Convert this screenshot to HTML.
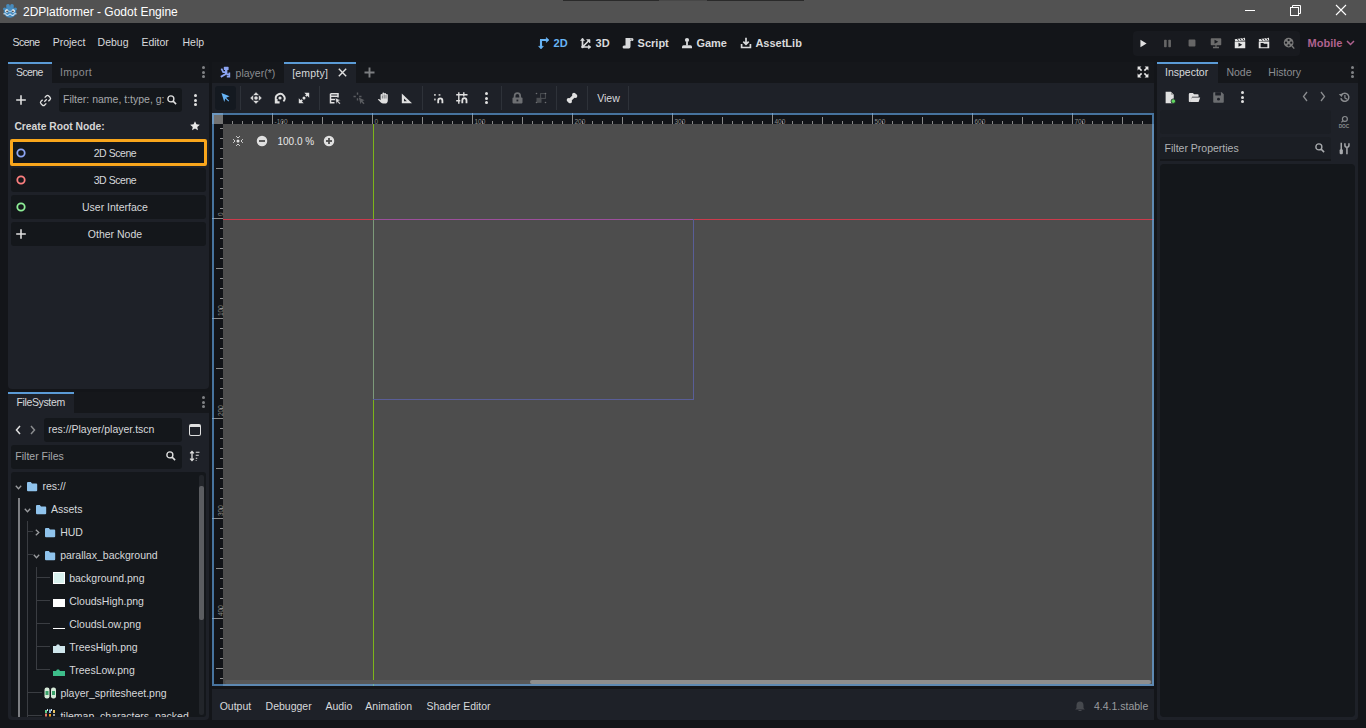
<!DOCTYPE html><html><head><meta charset="utf-8"><style>
html,body{margin:0;padding:0;}
body{width:1366px;height:728px;overflow:hidden;position:relative;background:#131519;font-family:"Liberation Sans",sans-serif;}
.t{position:absolute;white-space:nowrap;line-height:1;}
.r{position:absolute;}
svg.r{overflow:visible;}
</style></head><body>
<div class="r" style="left:0px;top:0px;width:1366px;height:23px;background:#525252;"></div>
<div class="r" style="left:563px;top:0px;width:96px;height:1px;background:#2a2a2a;"></div>
<div class="r" style="left:659px;top:0px;width:48px;height:1px;background:#474747;"></div>
<div class="r" style="left:707px;top:0px;width:97px;height:1px;background:#2a2a2a;"></div>
<svg class="r" style="left:3px;top:4px;" width="14" height="14" viewBox="0 0 14 14"><g fill="#478cbf"><ellipse cx="7" cy="8" rx="6.3" ry="5.8"/><circle cx="5" cy="2" r="1.9"/><circle cx="9" cy="2" r="1.9"/><circle cx="1.6" cy="5" r="1.6"/><circle cx="12.4" cy="5" r="1.6"/></g><circle cx="3.8" cy="7" r="1.7" fill="#fff"/><circle cx="10.2" cy="7" r="1.7" fill="#fff"/><circle cx="4.1" cy="7.3" r="0.9" fill="#414042"/><circle cx="9.9" cy="7.3" r="0.9" fill="#414042"/><circle cx="7" cy="7.5" r="0.8" fill="#cfe3f2"/><path d="M0.4 9.8 H2.8 L3.4 11.4 H5.4 L6 10.2 H8 L8.6 11.4 H10.6 L11.2 9.8 H13.6" stroke="#d8e8f4" stroke-width="1" fill="none"/></svg>
<div class="t" style="left:23px;top:5.84px;font-size:12px;color:#ffffff;">2DPlatformer - Godot Engine</div>
<div class="r" style="left:1245px;top:10px;width:10px;height:1px;background:#fff;"></div>
<svg class="r" style="left:1289px;top:4px;" width="13" height="13" viewBox="0 0 13 13"><rect x="1.5" y="3.5" width="8" height="8" fill="none" stroke="#fff" stroke-width="1"/><path d="M3.5 3.5 V1.5 H11.5 V9.5 H9.5" fill="none" stroke="#fff" stroke-width="1"/></svg>
<svg class="r" style="left:1335px;top:4px;" width="12" height="12" viewBox="0 0 12 12"><path d="M1 1 L11 11 M11 1 L1 11" stroke="#fff" stroke-width="1.1"/></svg>
<div class="t" style="left:12.6px;top:37.11px;font-size:10.5px;color:#d7d9dc;letter-spacing:-0.6px;">Scene</div>
<div class="t" style="left:52.7px;top:37.11px;font-size:10.5px;color:#d7d9dc;">Project</div>
<div class="t" style="left:97.6px;top:37.11px;font-size:10.5px;color:#d7d9dc;">Debug</div>
<div class="t" style="left:141.4px;top:37.11px;font-size:10.5px;color:#d7d9dc;">Editor</div>
<div class="t" style="left:182.5px;top:37.11px;font-size:10.5px;color:#d7d9dc;">Help</div>
<svg class="r" style="left:537px;top:37px;" width="13" height="13" viewBox="0 0 13 13"><path d="M4 3 V10 M3 3 H10" stroke="#68b4f5" stroke-width="2.1" fill="none"/><path d="M1.6 9.3 L4 12 L6.4 9.3Z M9.3 0.6 L12 3 L9.3 5.4Z" fill="#68b4f5" stroke="#68b4f5" stroke-width="0.6" stroke-linejoin="round"/></svg>
<div class="t" style="left:553.6px;top:37.69px;font-size:11px;color:#68b4f5;font-weight:bold;">2D</div>
<svg class="r" style="left:580px;top:37px;" width="12" height="12" viewBox="0 0 12 12"><path d="M2.5 10 V3 M2.5 10 H9.5 M2.5 10 L8.5 4" stroke="#d9dadc" stroke-width="1.7" fill="none"/><path d="M0.6 3.6 L2.5 1 L4.4 3.6Z M8.4 8.1 L11 10 L8.4 11.9Z M6.6 2.6 H10 V6Z" fill="#d9dadc" stroke="#d9dadc" stroke-width="0.6" stroke-linejoin="round"/><circle cx="2.5" cy="10" r="1.3" fill="#d9dadc"/></svg>
<div class="t" style="left:595.6px;top:37.69px;font-size:11px;color:#d9dadc;font-weight:bold;">3D</div>
<svg class="r" style="left:622px;top:37px;" width="12" height="12" viewBox="0 0 12 12"><path d="M3.5 1 H10 Q11.5 1 11.5 2.5 Q11.5 4 10 4 H8.5 V9.5 Q8.5 11.5 6.8 11.5 H2 Q0.6 11.5 0.6 10 Q0.6 8.5 2 8.5 H3.5Z" fill="#d9dadc"/><path d="M9 1.5 Q8.5 2.5 9.5 3.5" stroke="#131519" stroke-width="0.6" fill="none"/></svg>
<div class="t" style="left:637.6px;top:37.69px;font-size:11px;color:#d9dadc;font-weight:bold;">Script</div>
<svg class="r" style="left:681px;top:37px;" width="12" height="12" viewBox="0 0 12 12"><circle cx="6" cy="3" r="2.1" fill="#d9dadc"/><rect x="5.1" y="4.5" width="1.8" height="4" fill="#d9dadc"/><path d="M1 11.3 V9.8 Q1 8.3 2.5 8.3 H9.5 Q11 8.3 11 9.8 V11.3Z" fill="#d9dadc"/></svg>
<div class="t" style="left:696.4px;top:37.69px;font-size:11px;color:#d9dadc;font-weight:bold;">Game</div>
<svg class="r" style="left:740px;top:37px;" width="12" height="12" viewBox="0 0 12 12"><path d="M6 0.8 V7 M3.3 4.6 L6 7.3 L8.7 4.6" stroke="#d9dadc" stroke-width="1.7" fill="none"/><path d="M1.6 7 V10.5 H10.4 V7" stroke="#d9dadc" stroke-width="1.7" fill="none"/></svg>
<div class="t" style="left:755.4px;top:37.69px;font-size:11px;color:#d9dadc;font-weight:bold;">AssetLib</div>
<div class="r" style="left:1133px;top:31px;width:167px;height:25px;background:#181a1f;border-radius:4px;"></div>
<svg class="r" style="left:1138.0px;top:37.5px" width="11" height="11" viewBox="0 0 16 16"><path d="M3.5 2.5 L12.5 8 L3.5 13.5 Z" fill="#e0e0e0"/></svg>
<svg class="r" style="left:1162.0px;top:37.5px" width="11" height="11" viewBox="0 0 16 16"><rect x="3" y="2.5" width="3.8" height="11" rx="1" fill="#666"/><rect x="9.2" y="2.5" width="3.8" height="11" rx="1" fill="#666"/></svg>
<svg class="r" style="left:1187.0px;top:38.0px" width="10" height="10" viewBox="0 0 16 16"><rect x="2.5" y="2.5" width="11" height="11" rx="1.5" fill="#666"/></svg>
<svg class="r" style="left:1210.0px;top:37.0px" width="12" height="12" viewBox="0 0 16 16"><path d="M1 2.5 Q1 1.5 2 1.5 H14 Q15 1.5 15 2.5 V10 Q15 11 14 11 H2 Q1 11 1 10Z" fill="#6b6b6b"/><path d="M6 3.5 L11 6.3 L6 9Z" fill="#1a1c20"/><rect x="7" y="11" width="2" height="2" fill="#6b6b6b"/><rect x="4" y="13" width="8" height="2" fill="#6b6b6b"/></svg>
<svg class="r" style="left:1234.0px;top:37.0px" width="12" height="12" viewBox="0 0 16 16"><path d="M1 6 H15 V15 H1Z" fill="#e6e6e6"/><path d="M1 3 L14.5 1 L15 4.5 L1.5 5.5Z" fill="#e6e6e6"/><path d="M4.5 2.5 L6 5 M8 2 L9.5 4.5 M11.5 1.5 L13 4" stroke="#181a1f" stroke-width="1.2"/><path d="M6 7.5 L11 10.3 L6 13Z" fill="#181a1f"/></svg>
<svg class="r" style="left:1258.0px;top:37.0px" width="12" height="12" viewBox="0 0 16 16"><path d="M1 6 H15 V15 H1Z" fill="#e6e6e6"/><path d="M1 3 L14.5 1 L15 4.5 L1.5 5.5Z" fill="#e6e6e6"/><path d="M4.5 2.5 L6 5 M8 2 L9.5 4.5 M11.5 1.5 L13 4" stroke="#181a1f" stroke-width="1.2"/><path d="M3.5 8 H7 L8 9 H12.5 V13.5 H3.5Z" fill="#181a1f"/></svg>
<svg class="r" style="left:1282.5px;top:37.0px" width="12" height="12" viewBox="0 0 16 16"><circle cx="7.5" cy="7.5" r="6.5" fill="#7a7a7a"/><circle cx="7.5" cy="4" r="1.5" fill="#181a1f"/><circle cx="7.5" cy="11" r="1.5" fill="#181a1f"/><circle cx="4" cy="7.5" r="1.5" fill="#181a1f"/><circle cx="11" cy="7.5" r="1.5" fill="#181a1f"/><path d="M12 12 L15 15.5" stroke="#7a7a7a" stroke-width="1.8"/></svg>
<div class="t" style="left:1307.6px;top:37.69px;font-size:11px;color:#b0628f;font-weight:bold;">Mobile</div>
<svg class="r" style="left:1346px;top:40px;" width="9" height="6" viewBox="0 0 9 6"><path d="M1 1 L4.5 4.5 L8 1" stroke="#b0628f" stroke-width="1.5" fill="none"/></svg>
<div class="r" style="left:8px;top:62px;width:201px;height:327px;background:#1e2128;border-radius:0 0 4px 4px;"></div>
<div class="r" style="left:8px;top:62px;width:201px;height:21px;background:#15171b;"></div>
<div class="r" style="left:8px;top:62px;width:44px;height:21px;background:#1e2128;"></div>
<div class="r" style="left:8px;top:62px;width:44px;height:2px;background:#5b9bd6;"></div>
<div class="t" style="left:16px;top:67.11px;font-size:10.5px;color:#d7d9dc;letter-spacing:-0.6px;">Scene</div>
<div class="t" style="left:60px;top:67.11px;font-size:10.5px;color:#8b8d91;letter-spacing:0.4px;">Import</div>
<div class="r" style="left:201.5px;top:66.0px;width:3px;height:3px;border-radius:2px;background:#808285"></div><div class="r" style="left:201.5px;top:70.5px;width:3px;height:3px;border-radius:2px;background:#808285"></div><div class="r" style="left:201.5px;top:75.0px;width:3px;height:3px;border-radius:2px;background:#808285"></div>
<svg class="r" style="left:14.0px;top:93.0px" width="14" height="14" viewBox="0 0 16 16"><path d="M8 2.5 V13.5 M2.5 8 H13.5" stroke="#e0e0e0" stroke-width="1.8"/></svg>
<svg class="r" style="left:38.5px;top:93.5px" width="13" height="13" viewBox="0 0 16 16"><path d="M6.5 9.5 L9.5 6.5" stroke="#e0e0e0" stroke-width="1.6"/><path d="M7 4.5 L9 2.5 Q10.5 1 12 2.5 L13.5 4 Q15 5.5 13.5 7 L11.5 9" stroke="#e0e0e0" stroke-width="1.6" fill="none"/><path d="M9 11.5 L7 13.5 Q5.5 15 4 13.5 L2.5 12 Q1 10.5 2.5 9 L4.5 7" stroke="#e0e0e0" stroke-width="1.6" fill="none"/></svg>
<div class="r" style="left:59px;top:88px;width:123px;height:24px;background:#14171b;border-radius:3px;"></div>
<div class="t" style="left:63px;top:94.11px;font-size:10.5px;color:#a6a8ab;width:103px;overflow:hidden;">Filter: name, t:type, g:</div>
<svg class="r" style="left:166.0px;top:94.0px" width="12" height="12" viewBox="0 0 16 16"><circle cx="6.5" cy="6.5" r="4" stroke="#e0e0e0" stroke-width="1.8" fill="none"/><path d="M9.5 9.5 L13.5 13.5" stroke="#e0e0e0" stroke-width="2"/></svg>
<div class="r" style="left:193.5px;top:94.0px;width:3px;height:3px;border-radius:2px;background:#e0e0e0"></div><div class="r" style="left:193.5px;top:98.5px;width:3px;height:3px;border-radius:2px;background:#e0e0e0"></div><div class="r" style="left:193.5px;top:103.0px;width:3px;height:3px;border-radius:2px;background:#e0e0e0"></div>
<div class="t" style="left:14.4px;top:122.28px;font-size:10.3px;color:#d6d6d6;font-weight:bold;">Create Root Node:</div>
<svg class="r" style="left:189.0px;top:120.0px" width="12" height="12" viewBox="0 0 16 16"><path d="M8 1.5 L9.9 5.8 L14.5 6.2 L11 9.3 L12 13.8 L8 11.4 L4 13.8 L5 9.3 L1.5 6.2 L6.1 5.8Z" fill="#e8e8e8"/></svg>
<div class="r" style="left:10px;top:139px;width:197px;height:27px;background:#14171b;border:3px solid #f9a61c;border-radius:2px;box-sizing:border-box;"></div>
<div class="r" style="left:11px;top:168px;width:195px;height:24px;background:#14171b;border-radius:3px;"></div>
<div class="r" style="left:11px;top:195px;width:195px;height:24px;background:#14171b;border-radius:3px;"></div>
<div class="r" style="left:11px;top:222px;width:195px;height:24px;background:#14171b;border-radius:3px;"></div>
<svg class="r" style="left:15px;top:147px;" width="12" height="12" viewBox="0 0 12 12"><circle cx="6" cy="6" r="3.7" stroke="#8da5f3" stroke-width="1.8" fill="none"/></svg>
<svg class="r" style="left:15px;top:174px;" width="12" height="12" viewBox="0 0 12 12"><circle cx="6" cy="6" r="3.7" stroke="#fc7f7f" stroke-width="1.8" fill="none"/></svg>
<svg class="r" style="left:15px;top:201px;" width="12" height="12" viewBox="0 0 12 12"><circle cx="6" cy="6" r="3.7" stroke="#8eef97" stroke-width="1.8" fill="none"/></svg>
<svg class="r" style="left:14.0px;top:227.0px" width="14" height="14" viewBox="0 0 16 16"><path d="M8 2.5 V13.5 M2.5 8 H13.5" stroke="#e0e0e0" stroke-width="1.8"/></svg>
<div class="t" style="left:15px;width:200px;text-align:center;top:148.11px;font-size:10.5px;color:#d7d9dc;letter-spacing:-0.45px;">2D Scene</div>
<div class="t" style="left:15px;width:200px;text-align:center;top:175.11px;font-size:10.5px;color:#d7d9dc;letter-spacing:-0.45px;">3D Scene</div>
<div class="t" style="left:15px;width:200px;text-align:center;top:202.11px;font-size:10.5px;color:#d7d9dc;">User Interface</div>
<div class="t" style="left:15px;width:200px;text-align:center;top:229.11px;font-size:10.5px;color:#d7d9dc;">Other Node</div>
<div class="r" style="left:8px;top:392px;width:201px;height:328px;background:#1e2128;border-radius:0 0 4px 4px;"></div>
<div class="r" style="left:8px;top:392px;width:201px;height:21px;background:#15171b;"></div>
<div class="r" style="left:8px;top:392px;width:66px;height:21px;background:#1e2128;"></div>
<div class="r" style="left:8px;top:392px;width:66px;height:2px;background:#5b9bd6;"></div>
<div class="t" style="left:16.4px;top:397.11px;font-size:10.5px;color:#d7d9dc;letter-spacing:-0.35px;">FileSystem</div>
<div class="r" style="left:201.5px;top:396.0px;width:3px;height:3px;border-radius:2px;background:#808285"></div><div class="r" style="left:201.5px;top:400.5px;width:3px;height:3px;border-radius:2px;background:#808285"></div><div class="r" style="left:201.5px;top:405.0px;width:3px;height:3px;border-radius:2px;background:#808285"></div>
<svg class="r" style="left:15px;top:425px;" width="6" height="10" viewBox="0 0 6 10"><path d="M5 1 L1.5 5 L5 9" stroke="#e0e0e0" stroke-width="1.5" fill="none"/></svg>
<svg class="r" style="left:30px;top:425px;" width="6" height="10" viewBox="0 0 6 10"><path d="M1 1 L4.5 5 L1 9" stroke="#8a8c8f" stroke-width="1.5" fill="none"/></svg>
<div class="r" style="left:44px;top:418px;width:138px;height:24px;background:#14171b;border-radius:3px;"></div>
<div class="t" style="left:48.2px;top:424.11px;font-size:10.5px;color:#d7d9dc;">res://Player/player.tscn</div>
<div class="r" style="left:189px;top:424px;width:12px;height:12px;background:transparent;border:1.6px solid #e0e0e0;border-top-width:3px;border-radius:2px;box-sizing:border-box;"></div>
<div class="r" style="left:11px;top:445px;width:171px;height:24px;background:#14171b;border-radius:3px;"></div>
<div class="t" style="left:15.3px;top:451.11px;font-size:10.5px;color:#a6a8ab;">Filter Files</div>
<svg class="r" style="left:165.0px;top:450.0px" width="12" height="12" viewBox="0 0 16 16"><circle cx="6.5" cy="6.5" r="4" stroke="#e0e0e0" stroke-width="1.8" fill="none"/><path d="M9.5 9.5 L13.5 13.5" stroke="#e0e0e0" stroke-width="2"/></svg>
<svg class="r" style="left:189.0px;top:450.0px" width="12" height="12" viewBox="0 0 16 16"><path d="M4 2 V14 M1.5 4.5 L4 2 L6.5 4.5 M1.5 11.5 L4 14 L6.5 11.5" stroke="#e0e0e0" stroke-width="1.8" fill="none"/><path d="M9 3 H14 M9 7 H13 M9 11 H11 M9 14 H10" stroke="#e0e0e0" stroke-width="1.5"/></svg>
<div class="r" style="left:11px;top:472px;width:195px;height:245px;background:#14171b;border-radius:3px;"></div>
<div class="r" style="left:199px;top:475px;width:5px;height:240px;background:#22252a;border-radius:2px;"></div>
<div class="r" style="left:199px;top:486px;width:5px;height:134px;background:#5b5d61;border-radius:2px;"></div>
<div class="r" style="left:0;top:0;width:1366px;height:728px;clip-path:inset(472px 1160px 11px 11px round 3px)"><div class="r" style="left:18px;top:498px;width:2px;height:221px;background:#7d7f83;"></div><div class="r" style="left:27px;top:521px;width:1px;height:198px;background:#3a3d42;"></div><div class="r" style="left:36px;top:567px;width:1px;height:103px;background:#3a3d42;"></div><div class="r" style="left:28px;top:531px;width:5px;height:1px;background:#3a3d42;"></div><div class="r" style="left:28px;top:554px;width:5px;height:1px;background:#3a3d42;"></div><div class="r" style="left:37px;top:577px;width:13px;height:1px;background:#3a3d42;"></div><div class="r" style="left:37px;top:600px;width:13px;height:1px;background:#3a3d42;"></div><div class="r" style="left:37px;top:623px;width:13px;height:1px;background:#3a3d42;"></div><div class="r" style="left:37px;top:646px;width:13px;height:1px;background:#3a3d42;"></div><div class="r" style="left:37px;top:669px;width:13px;height:1px;background:#3a3d42;"></div><div class="r" style="left:28px;top:692px;width:14px;height:1px;background:#3a3d42;"></div><div class="r" style="left:28px;top:715px;width:14px;height:1px;background:#3a3d42;"></div><svg class="r" style="left:15px;top:484.5px;" width="7" height="5" viewBox="0 0 7 5"><path d="M0.8 0.8 L3.5 3.8 L6.2 0.8" stroke="#9a9c9f" stroke-width="1.3" fill="none"/></svg><svg class="r" style="left:27px;top:482px;" width="11" height="10" viewBox="0 0 11 10"><path d="M0 1 Q0 0 1 0 H3.8 L5 1.4 H9.2 Q10.2 1.4 10.2 2.4 V8.2 Q10.2 9.2 9.2 9.2 H1 Q0 9.2 0 8.2Z" fill="#8fc3ec"/></svg><div class="t" style="left:42.4px;top:481.11px;font-size:10.5px;color:#d7d9dc;">res://</div><svg class="r" style="left:24px;top:507.5px;" width="7" height="5" viewBox="0 0 7 5"><path d="M0.8 0.8 L3.5 3.8 L6.2 0.8" stroke="#9a9c9f" stroke-width="1.3" fill="none"/></svg><svg class="r" style="left:35.7px;top:504.5px;" width="11" height="10" viewBox="0 0 11 10"><path d="M0 1 Q0 0 1 0 H3.8 L5 1.4 H9.2 Q10.2 1.4 10.2 2.4 V8.2 Q10.2 9.2 9.2 9.2 H1 Q0 9.2 0 8.2Z" fill="#8fc3ec"/></svg><div class="t" style="left:51px;top:504.11px;font-size:10.5px;color:#d7d9dc;">Assets</div><svg class="r" style="left:35px;top:528.5px;" width="5" height="7" viewBox="0 0 5 7"><path d="M0.8 0.8 L3.8 3.5 L0.8 6.2" stroke="#9a9c9f" stroke-width="1.3" fill="none"/></svg><svg class="r" style="left:45px;top:527.5px;" width="11" height="10" viewBox="0 0 11 10"><path d="M0 1 Q0 0 1 0 H3.8 L5 1.4 H9.2 Q10.2 1.4 10.2 2.4 V8.2 Q10.2 9.2 9.2 9.2 H1 Q0 9.2 0 8.2Z" fill="#8fc3ec"/></svg><div class="t" style="left:60.2px;top:527.11px;font-size:10.5px;color:#d7d9dc;">HUD</div><svg class="r" style="left:33px;top:553.5px;" width="7" height="5" viewBox="0 0 7 5"><path d="M0.8 0.8 L3.5 3.8 L6.2 0.8" stroke="#9a9c9f" stroke-width="1.3" fill="none"/></svg><svg class="r" style="left:45px;top:550.5px;" width="11" height="10" viewBox="0 0 11 10"><path d="M0 1 Q0 0 1 0 H3.8 L5 1.4 H9.2 Q10.2 1.4 10.2 2.4 V8.2 Q10.2 9.2 9.2 9.2 H1 Q0 9.2 0 8.2Z" fill="#8fc3ec"/></svg><div class="t" style="left:60.2px;top:550.11px;font-size:10.5px;color:#d7d9dc;">parallax_background</div><div class="r" style="left:53px;top:572px;width:12px;height:12px;background:#d8f1ee;box-shadow:inset 0 0 0 1px #ffffff;"></div><div class="t" style="left:69.2px;top:573.11px;font-size:10.5px;color:#d7d9dc;">background.png</div><div class="r" style="left:53px;top:599px;width:12px;height:8px;background:#ffffff;"></div><div class="t" style="left:69.2px;top:596.11px;font-size:10.5px;color:#d7d9dc;">CloudsHigh.png</div><div class="r" style="left:53px;top:628px;width:12px;height:1px;background:#ffffff;"></div><div class="t" style="left:69.2px;top:619.11px;font-size:10.5px;color:#d7d9dc;">CloudsLow.png</div><svg class="r" style="left:53px;top:643px;" width="12" height="10" viewBox="0 0 12 10"><path d="M0 3 H3 L4 1.5 H6 L7 3 H12 V10 H0Z" fill="#cfe6ec"/></svg><div class="t" style="left:69.2px;top:642.11px;font-size:10.5px;color:#d7d9dc;">TreesHigh.png</div><svg class="r" style="left:53px;top:669px;" width="12" height="8" viewBox="0 0 12 8"><path d="M0 2 H3 L4 0.5 H6 L7 2 H12 V7 H0Z" fill="#3dbd8a"/></svg><div class="t" style="left:69.2px;top:665.11px;font-size:10.5px;color:#d7d9dc;">TreesLow.png</div><svg class="r" style="left:44px;top:687px;" width="13" height="12" viewBox="0 0 13 12"><rect x="0.5" y="0.5" width="5" height="11" rx="2.2" fill="#d5ead8"/><rect x="7" y="0.5" width="5" height="11" rx="2.2" fill="#d5ead8"/><rect x="1.5" y="4" width="3" height="4" fill="#3aa36a"/><rect x="8" y="4" width="3" height="4" fill="#3aa36a"/></svg><div class="t" style="left:60.4px;top:688.11px;font-size:10.5px;color:#d7d9dc;">player_spritesheet.png</div><svg class="r" style="left:45px;top:709px;" width="11" height="8" viewBox="0 0 11 8"><rect x="0" y="1" width="2" height="3" fill="#5fd08a"/><rect x="4" y="0.5" width="2" height="3.5" fill="#8fb0d8"/><rect x="8" y="1" width="2" height="3" fill="#e8c060"/><rect x="0" y="4.5" width="2" height="3" fill="#e07a6a"/><rect x="4" y="5" width="2" height="2.5" fill="#f0a020"/><rect x="8" y="5" width="2" height="2" fill="#9a9aa0"/><rect x="2" y="0" width="1" height="2" fill="#cfe8f0"/><rect x="6" y="0" width="1" height="2" fill="#cfe8f0"/></svg><div class="t" style="left:60.4px;top:711.11px;font-size:10.5px;color:#d7d9dc;">tilemap_characters_packed</div></div>
<div class="r" style="left:212px;top:62px;width:942px;height:21px;background:#15171b;"></div>
<div class="r" style="left:284px;top:62px;width:72px;height:21px;background:#1e2128;"></div>
<div class="r" style="left:284px;top:62px;width:72px;height:2px;background:#5b9bd6;"></div>
<svg class="r" style="left:220px;top:66px;" width="12" height="12" viewBox="0 0 12 12"><rect x="3.8" y="0.8" width="4.8" height="3.2" rx="0.6" fill="#8da5f3"/><g stroke="#8da5f3" fill="none"><path d="M6.2 3.5 V8.6" stroke-width="2.4"/><path d="M1.4 2.6 L3.2 6.2 H6" stroke-width="1.7"/><path d="M5.8 8 L0.8 10.9" stroke-width="1.9"/><path d="M6.5 8.4 H9.4 V6.6 M9.4 8.4 V10.6 H6.8" stroke-width="1.6"/></g></svg>
<div class="t" style="left:235.6px;top:67.51px;font-size:10.5px;color:#8b8d91;">player(*)</div>
<div class="t" style="left:292.2px;top:67.51px;font-size:10.5px;color:#d7d9dc;letter-spacing:0.2px;">[empty]</div>
<svg class="r" style="left:337.5px;top:67.5px;" width="9" height="9" viewBox="0 0 9 9"><path d="M0.8 0.8 L8.2 8.2 M8.2 0.8 L0.8 8.2" stroke="#e0e0e0" stroke-width="1.4"/></svg>
<svg class="r" style="left:363.5px;top:67px;" width="11" height="11" viewBox="0 0 11 11"><path d="M5.5 0.5 V10.5 M0.5 5.5 H10.5" stroke="#7c7e81" stroke-width="1.9"/></svg>
<svg class="r" style="left:1137px;top:66px;" width="12" height="12" viewBox="0 0 12 12"><path d="M0.6 0.6 H4.4 L0.6 4.4Z M11.4 0.6 H7.6 L11.4 4.4Z M0.6 11.4 H4.4 L0.6 7.6Z M11.4 11.4 H7.6 L11.4 7.6Z" fill="#e8e8e8"/><path d="M1.5 1.5 L4.6 4.6 M10.5 1.5 L7.4 4.6 M1.5 10.5 L4.6 7.4 M10.5 10.5 L7.4 7.4" stroke="#e8e8e8" stroke-width="1.6"/></svg>
<div class="r" style="left:212px;top:83px;width:942px;height:30px;background:#1e2128;"></div>
<div class="r" style="left:215px;top:86px;width:21px;height:24px;background:#141920;border-radius:3px;"></div>
<svg class="r" style="left:219.0px;top:90.7px" width="13" height="13" viewBox="0 0 16 16"><path d="M3 2.5 L13 6.5 L8.8 8.3 L12.5 12 L11.5 13 L7.8 9.3 L6.5 13.5Z" fill="#66b3f5"/></svg>
<div class="r" style="left:240px;top:86px;width:1px;height:24px;background:#2e3239;"></div>
<div class="r" style="left:319px;top:86px;width:1px;height:24px;background:#2e3239;"></div>
<div class="r" style="left:422px;top:86px;width:1px;height:24px;background:#2e3239;"></div>
<div class="r" style="left:501px;top:86px;width:1px;height:24px;background:#2e3239;"></div>
<div class="r" style="left:556px;top:86px;width:1px;height:24px;background:#2e3239;"></div>
<div class="r" style="left:587px;top:86px;width:1px;height:24px;background:#2e3239;"></div>
<div class="r" style="left:628px;top:86px;width:1px;height:24px;background:#2e3239;"></div>
<svg class="r" style="left:250px;top:92px;" width="12" height="12" viewBox="0 0 12 12"><path d="M6 0.6 L8.3 2.9 H3.7Z M6 11.4 L8.3 9.1 H3.7Z M0.6 6 L2.9 3.7 V8.3Z M11.4 6 L9.1 3.7 V8.3Z" fill="#e0e0e0" stroke="#e0e0e0" stroke-width="0.5" stroke-linejoin="round"/><circle cx="6" cy="6" r="1.8" fill="#e0e0e0"/></svg>
<svg class="r" style="left:274px;top:92px;" width="12" height="12" viewBox="0 0 12 12"><path d="M2.2 8.2 A4.4 4.4 0 1 1 9.4 9.4" stroke="#e0e0e0" stroke-width="1.9" fill="none"/><path d="M0.8 7 H3.6 V9.3 H5.6 V11.6 H0.8Z" fill="#e0e0e0"/><circle cx="6" cy="6" r="1.6" fill="#e0e0e0"/></svg>
<svg class="r" style="left:298px;top:92px;" width="12" height="12" viewBox="0 0 12 12"><path d="M6.3 0.8 H11.2 V5.7Z M5.7 11.2 H0.8 V6.3Z" fill="#e0e0e0"/><path d="M10 2 L7.8 4.2 M2 10 L4.2 7.8" stroke="#e0e0e0" stroke-width="1.8"/><circle cx="6" cy="6" r="1.5" fill="#e0e0e0"/></svg>
<svg class="r" style="left:329px;top:92px;" width="12" height="12" viewBox="0 0 12 12"><path d="M1.5 1.8 H9 V5.5 M1.5 1.8 V10.8 H5.5 M1.5 4.3 H8.5 M1.5 7.5 H6" stroke="#e0e0e0" stroke-width="1.5" fill="none"/><path d="M6.2 5.8 L11.6 8.3 L9.4 9.1 L11.5 11.2 L10.5 12.2 L8.4 10.1 L7.5 12.3Z" fill="#e0e0e0" stroke="#1e2128" stroke-width="0.5"/></svg>
<svg class="r" style="left:353px;top:92px;" width="12" height="12" viewBox="0 0 12 12"><path d="M4.5 0.5 V2.8 M4.5 6.2 V8.5 M0.5 4.5 H2.8 M6.2 4.5 H8.5" stroke="#5a5c60" stroke-width="1.4"/><path d="M5.8 5.6 L11.6 8.3 L9.4 9.1 L11.5 11.2 L10.5 12.2 L8.4 10.1 L7.5 12.3Z" fill="#5a5c60"/></svg>
<svg class="r" style="left:377px;top:92px;" width="12" height="12" viewBox="0 0 12 12"><path d="M0.8 7.6 Q1.6 6.6 2.8 7.4 L3.6 8.2 V3 Q3.6 2 4.5 2 Q5.4 2 5.4 3 V1.4 Q5.4 0.5 6.3 0.5 Q7.2 0.5 7.2 1.4 V1.8 Q7.2 1 8.1 1 Q9 1 9 1.9 V2.8 Q9 2 9.9 2 Q10.8 2 10.8 2.9 V8.5 Q10.8 11.6 7.8 11.6 H6.2 Q4.8 11.6 3.8 10.6Z" fill="#e0e0e0"/><path d="M5.4 3.5 V6.5 M7.2 2.5 V6.5 M9 3 V6.5" stroke="#1e2128" stroke-width="0.5"/></svg>
<svg class="r" style="left:401px;top:93px;" width="12" height="11" viewBox="0 0 12 11"><path d="M0.8 0.5 V10.3 H11 Z" fill="#e0e0e0"/><path d="M3 5.5 V8.3 H5.9Z" fill="#1e2128"/></svg>
<svg class="r" style="left:433px;top:93px;" width="11" height="11" viewBox="0 0 11 11"><rect x="1" y="1" width="1.8" height="1.8" fill="#b8b8b8"/><rect x="5.6" y="1" width="1.8" height="1.8" fill="#b8b8b8"/><rect x="1" y="5.6" width="1.8" height="1.8" fill="#b8b8b8"/><path d="M5.2 10.2 V7.8 Q5.2 5.4 7.3 5.4 Q9.4 5.4 9.4 7.8 V10.2" stroke="#e0e0e0" stroke-width="1.8" fill="none"/></svg>
<svg class="r" style="left:456px;top:92px;" width="12" height="12" viewBox="0 0 12 12"><path d="M2.8 0.3 V11.7 M7.8 0.3 V4.5 M0.2 2.7 H11.5 M0.2 8.7 H4.3" stroke="#e0e0e0" stroke-width="1.4" fill="none"/><path d="M6.3 11.2 V8.6 Q6.3 6.2 8.4 6.2 Q10.5 6.2 10.5 8.6 V11.2" stroke="#e0e0e0" stroke-width="1.8" fill="none"/></svg>
<div class="r" style="left:484.5px;top:92.0px;width:3px;height:3px;border-radius:2px;background:#e0e0e0"></div><div class="r" style="left:484.5px;top:96.5px;width:3px;height:3px;border-radius:2px;background:#e0e0e0"></div><div class="r" style="left:484.5px;top:101.0px;width:3px;height:3px;border-radius:2px;background:#e0e0e0"></div>
<svg class="r" style="left:512px;top:92px;" width="11" height="12" viewBox="0 0 11 12"><path d="M2.6 6 V4.4 Q2.6 1.2 5.4 1.2 Q8.2 1.2 8.2 4.4 V6" stroke="#6d6f72" stroke-width="1.8" fill="none"/><rect x="0.5" y="5.6" width="10" height="5.8" rx="0.8" fill="#6d6f72"/><rect x="4.5" y="7.6" width="1.8" height="1.8" fill="#1e2128"/></svg>
<svg class="r" style="left:535px;top:92px;" width="12" height="12" viewBox="0 0 12 12"><rect x="1.5" y="5.8" width="5" height="5" fill="#4b4e52"/><rect x="5.6" y="1.6" width="4.8" height="4.8" fill="none" stroke="#4b4e52" stroke-width="1"/><circle cx="1.5" cy="1.5" r="0.8" fill="#6d6f72"/><circle cx="10.5" cy="1.5" r="0.8" fill="#6d6f72"/><circle cx="1.5" cy="10.5" r="0.8" fill="#6d6f72"/><circle cx="10.5" cy="10.5" r="0.8" fill="#6d6f72"/></svg>
<svg class="r" style="left:566px;top:92px;" width="12" height="12" viewBox="0 0 12 12"><path d="M3.6 8.4 L8.4 3.6" stroke="#e0e0e0" stroke-width="3"/><circle cx="2.6" cy="8" r="1.9" fill="#e0e0e0"/><circle cx="4" cy="9.4" r="1.9" fill="#e0e0e0"/><circle cx="8" cy="2.6" r="1.9" fill="#e0e0e0"/><circle cx="9.4" cy="4" r="1.9" fill="#e0e0e0"/></svg>
<div class="t" style="left:597.2px;top:93.11px;font-size:10.5px;color:#d7d9dc;">View</div>
<div class="r" style="left:212px;top:113px;width:942px;height:573px;background:#4d4d4d;"></div>
<div class="r" style="left:212px;top:113px;width:942px;height:11px;background:#121418;"></div>
<div class="r" style="left:212px;top:113px;width:11px;height:573px;background:#121418;"></div>
<div class="r" style="left:212px;top:113px;width:11px;height:11px;background:#727272;"></div>
<div class="r" style="left:232px;top:121px;width:1px;height:3px;background:#8c8c8c;"></div>
<div class="r" style="left:242px;top:121px;width:1px;height:3px;background:#8c8c8c;"></div>
<div class="r" style="left:252px;top:121px;width:1px;height:3px;background:#8c8c8c;"></div>
<div class="r" style="left:262px;top:121px;width:1px;height:3px;background:#8c8c8c;"></div>
<div class="r" style="left:272px;top:113px;width:1px;height:11px;background:#8c8c8c;"></div>
<div class="r" style="left:282px;top:121px;width:1px;height:3px;background:#8c8c8c;"></div>
<div class="r" style="left:292px;top:121px;width:1px;height:3px;background:#8c8c8c;"></div>
<div class="r" style="left:302px;top:121px;width:1px;height:3px;background:#8c8c8c;"></div>
<div class="r" style="left:312px;top:121px;width:1px;height:3px;background:#8c8c8c;"></div>
<div class="r" style="left:322px;top:117px;width:1px;height:7px;background:#8c8c8c;"></div>
<div class="r" style="left:332px;top:121px;width:1px;height:3px;background:#8c8c8c;"></div>
<div class="r" style="left:342px;top:121px;width:1px;height:3px;background:#8c8c8c;"></div>
<div class="r" style="left:352px;top:121px;width:1px;height:3px;background:#8c8c8c;"></div>
<div class="r" style="left:362px;top:121px;width:1px;height:3px;background:#8c8c8c;"></div>
<div class="r" style="left:372px;top:113px;width:1px;height:11px;background:#8c8c8c;"></div>
<div class="r" style="left:382px;top:121px;width:1px;height:3px;background:#8c8c8c;"></div>
<div class="r" style="left:392px;top:121px;width:1px;height:3px;background:#8c8c8c;"></div>
<div class="r" style="left:402px;top:121px;width:1px;height:3px;background:#8c8c8c;"></div>
<div class="r" style="left:412px;top:121px;width:1px;height:3px;background:#8c8c8c;"></div>
<div class="r" style="left:422px;top:117px;width:1px;height:7px;background:#8c8c8c;"></div>
<div class="r" style="left:432px;top:121px;width:1px;height:3px;background:#8c8c8c;"></div>
<div class="r" style="left:442px;top:121px;width:1px;height:3px;background:#8c8c8c;"></div>
<div class="r" style="left:452px;top:121px;width:1px;height:3px;background:#8c8c8c;"></div>
<div class="r" style="left:462px;top:121px;width:1px;height:3px;background:#8c8c8c;"></div>
<div class="r" style="left:472px;top:113px;width:1px;height:11px;background:#8c8c8c;"></div>
<div class="r" style="left:482px;top:121px;width:1px;height:3px;background:#8c8c8c;"></div>
<div class="r" style="left:492px;top:121px;width:1px;height:3px;background:#8c8c8c;"></div>
<div class="r" style="left:502px;top:121px;width:1px;height:3px;background:#8c8c8c;"></div>
<div class="r" style="left:512px;top:121px;width:1px;height:3px;background:#8c8c8c;"></div>
<div class="r" style="left:522px;top:117px;width:1px;height:7px;background:#8c8c8c;"></div>
<div class="r" style="left:532px;top:121px;width:1px;height:3px;background:#8c8c8c;"></div>
<div class="r" style="left:542px;top:121px;width:1px;height:3px;background:#8c8c8c;"></div>
<div class="r" style="left:552px;top:121px;width:1px;height:3px;background:#8c8c8c;"></div>
<div class="r" style="left:562px;top:121px;width:1px;height:3px;background:#8c8c8c;"></div>
<div class="r" style="left:572px;top:113px;width:1px;height:11px;background:#8c8c8c;"></div>
<div class="r" style="left:582px;top:121px;width:1px;height:3px;background:#8c8c8c;"></div>
<div class="r" style="left:592px;top:121px;width:1px;height:3px;background:#8c8c8c;"></div>
<div class="r" style="left:602px;top:121px;width:1px;height:3px;background:#8c8c8c;"></div>
<div class="r" style="left:612px;top:121px;width:1px;height:3px;background:#8c8c8c;"></div>
<div class="r" style="left:622px;top:117px;width:1px;height:7px;background:#8c8c8c;"></div>
<div class="r" style="left:632px;top:121px;width:1px;height:3px;background:#8c8c8c;"></div>
<div class="r" style="left:642px;top:121px;width:1px;height:3px;background:#8c8c8c;"></div>
<div class="r" style="left:652px;top:121px;width:1px;height:3px;background:#8c8c8c;"></div>
<div class="r" style="left:662px;top:121px;width:1px;height:3px;background:#8c8c8c;"></div>
<div class="r" style="left:672px;top:113px;width:1px;height:11px;background:#8c8c8c;"></div>
<div class="r" style="left:682px;top:121px;width:1px;height:3px;background:#8c8c8c;"></div>
<div class="r" style="left:692px;top:121px;width:1px;height:3px;background:#8c8c8c;"></div>
<div class="r" style="left:702px;top:121px;width:1px;height:3px;background:#8c8c8c;"></div>
<div class="r" style="left:712px;top:121px;width:1px;height:3px;background:#8c8c8c;"></div>
<div class="r" style="left:722px;top:117px;width:1px;height:7px;background:#8c8c8c;"></div>
<div class="r" style="left:732px;top:121px;width:1px;height:3px;background:#8c8c8c;"></div>
<div class="r" style="left:742px;top:121px;width:1px;height:3px;background:#8c8c8c;"></div>
<div class="r" style="left:752px;top:121px;width:1px;height:3px;background:#8c8c8c;"></div>
<div class="r" style="left:762px;top:121px;width:1px;height:3px;background:#8c8c8c;"></div>
<div class="r" style="left:772px;top:113px;width:1px;height:11px;background:#8c8c8c;"></div>
<div class="r" style="left:782px;top:121px;width:1px;height:3px;background:#8c8c8c;"></div>
<div class="r" style="left:792px;top:121px;width:1px;height:3px;background:#8c8c8c;"></div>
<div class="r" style="left:802px;top:121px;width:1px;height:3px;background:#8c8c8c;"></div>
<div class="r" style="left:812px;top:121px;width:1px;height:3px;background:#8c8c8c;"></div>
<div class="r" style="left:822px;top:117px;width:1px;height:7px;background:#8c8c8c;"></div>
<div class="r" style="left:832px;top:121px;width:1px;height:3px;background:#8c8c8c;"></div>
<div class="r" style="left:842px;top:121px;width:1px;height:3px;background:#8c8c8c;"></div>
<div class="r" style="left:852px;top:121px;width:1px;height:3px;background:#8c8c8c;"></div>
<div class="r" style="left:862px;top:121px;width:1px;height:3px;background:#8c8c8c;"></div>
<div class="r" style="left:872px;top:113px;width:1px;height:11px;background:#8c8c8c;"></div>
<div class="r" style="left:882px;top:121px;width:1px;height:3px;background:#8c8c8c;"></div>
<div class="r" style="left:892px;top:121px;width:1px;height:3px;background:#8c8c8c;"></div>
<div class="r" style="left:902px;top:121px;width:1px;height:3px;background:#8c8c8c;"></div>
<div class="r" style="left:912px;top:121px;width:1px;height:3px;background:#8c8c8c;"></div>
<div class="r" style="left:922px;top:117px;width:1px;height:7px;background:#8c8c8c;"></div>
<div class="r" style="left:932px;top:121px;width:1px;height:3px;background:#8c8c8c;"></div>
<div class="r" style="left:942px;top:121px;width:1px;height:3px;background:#8c8c8c;"></div>
<div class="r" style="left:952px;top:121px;width:1px;height:3px;background:#8c8c8c;"></div>
<div class="r" style="left:962px;top:121px;width:1px;height:3px;background:#8c8c8c;"></div>
<div class="r" style="left:972px;top:113px;width:1px;height:11px;background:#8c8c8c;"></div>
<div class="r" style="left:982px;top:121px;width:1px;height:3px;background:#8c8c8c;"></div>
<div class="r" style="left:992px;top:121px;width:1px;height:3px;background:#8c8c8c;"></div>
<div class="r" style="left:1002px;top:121px;width:1px;height:3px;background:#8c8c8c;"></div>
<div class="r" style="left:1012px;top:121px;width:1px;height:3px;background:#8c8c8c;"></div>
<div class="r" style="left:1022px;top:117px;width:1px;height:7px;background:#8c8c8c;"></div>
<div class="r" style="left:1032px;top:121px;width:1px;height:3px;background:#8c8c8c;"></div>
<div class="r" style="left:1042px;top:121px;width:1px;height:3px;background:#8c8c8c;"></div>
<div class="r" style="left:1052px;top:121px;width:1px;height:3px;background:#8c8c8c;"></div>
<div class="r" style="left:1062px;top:121px;width:1px;height:3px;background:#8c8c8c;"></div>
<div class="r" style="left:1072px;top:113px;width:1px;height:11px;background:#8c8c8c;"></div>
<div class="r" style="left:1082px;top:121px;width:1px;height:3px;background:#8c8c8c;"></div>
<div class="r" style="left:1092px;top:121px;width:1px;height:3px;background:#8c8c8c;"></div>
<div class="r" style="left:1102px;top:121px;width:1px;height:3px;background:#8c8c8c;"></div>
<div class="r" style="left:1112px;top:121px;width:1px;height:3px;background:#8c8c8c;"></div>
<div class="r" style="left:1122px;top:117px;width:1px;height:7px;background:#8c8c8c;"></div>
<div class="r" style="left:1132px;top:121px;width:1px;height:3px;background:#8c8c8c;"></div>
<div class="r" style="left:1142px;top:121px;width:1px;height:3px;background:#8c8c8c;"></div>
<div class="r" style="left:220px;top:128px;width:3px;height:1px;background:#8c8c8c;"></div>
<div class="r" style="left:220px;top:138px;width:3px;height:1px;background:#8c8c8c;"></div>
<div class="r" style="left:220px;top:148px;width:3px;height:1px;background:#8c8c8c;"></div>
<div class="r" style="left:220px;top:158px;width:3px;height:1px;background:#8c8c8c;"></div>
<div class="r" style="left:216px;top:168px;width:7px;height:1px;background:#8c8c8c;"></div>
<div class="r" style="left:220px;top:178px;width:3px;height:1px;background:#8c8c8c;"></div>
<div class="r" style="left:220px;top:188px;width:3px;height:1px;background:#8c8c8c;"></div>
<div class="r" style="left:220px;top:198px;width:3px;height:1px;background:#8c8c8c;"></div>
<div class="r" style="left:220px;top:208px;width:3px;height:1px;background:#8c8c8c;"></div>
<div class="r" style="left:212px;top:218px;width:11px;height:1px;background:#8c8c8c;"></div>
<div class="r" style="left:220px;top:228px;width:3px;height:1px;background:#8c8c8c;"></div>
<div class="r" style="left:220px;top:238px;width:3px;height:1px;background:#8c8c8c;"></div>
<div class="r" style="left:220px;top:248px;width:3px;height:1px;background:#8c8c8c;"></div>
<div class="r" style="left:220px;top:258px;width:3px;height:1px;background:#8c8c8c;"></div>
<div class="r" style="left:216px;top:268px;width:7px;height:1px;background:#8c8c8c;"></div>
<div class="r" style="left:220px;top:278px;width:3px;height:1px;background:#8c8c8c;"></div>
<div class="r" style="left:220px;top:288px;width:3px;height:1px;background:#8c8c8c;"></div>
<div class="r" style="left:220px;top:298px;width:3px;height:1px;background:#8c8c8c;"></div>
<div class="r" style="left:220px;top:308px;width:3px;height:1px;background:#8c8c8c;"></div>
<div class="r" style="left:212px;top:318px;width:11px;height:1px;background:#8c8c8c;"></div>
<div class="r" style="left:220px;top:328px;width:3px;height:1px;background:#8c8c8c;"></div>
<div class="r" style="left:220px;top:338px;width:3px;height:1px;background:#8c8c8c;"></div>
<div class="r" style="left:220px;top:348px;width:3px;height:1px;background:#8c8c8c;"></div>
<div class="r" style="left:220px;top:358px;width:3px;height:1px;background:#8c8c8c;"></div>
<div class="r" style="left:216px;top:368px;width:7px;height:1px;background:#8c8c8c;"></div>
<div class="r" style="left:220px;top:378px;width:3px;height:1px;background:#8c8c8c;"></div>
<div class="r" style="left:220px;top:388px;width:3px;height:1px;background:#8c8c8c;"></div>
<div class="r" style="left:220px;top:398px;width:3px;height:1px;background:#8c8c8c;"></div>
<div class="r" style="left:220px;top:408px;width:3px;height:1px;background:#8c8c8c;"></div>
<div class="r" style="left:212px;top:418px;width:11px;height:1px;background:#8c8c8c;"></div>
<div class="r" style="left:220px;top:428px;width:3px;height:1px;background:#8c8c8c;"></div>
<div class="r" style="left:220px;top:438px;width:3px;height:1px;background:#8c8c8c;"></div>
<div class="r" style="left:220px;top:448px;width:3px;height:1px;background:#8c8c8c;"></div>
<div class="r" style="left:220px;top:458px;width:3px;height:1px;background:#8c8c8c;"></div>
<div class="r" style="left:216px;top:468px;width:7px;height:1px;background:#8c8c8c;"></div>
<div class="r" style="left:220px;top:478px;width:3px;height:1px;background:#8c8c8c;"></div>
<div class="r" style="left:220px;top:488px;width:3px;height:1px;background:#8c8c8c;"></div>
<div class="r" style="left:220px;top:498px;width:3px;height:1px;background:#8c8c8c;"></div>
<div class="r" style="left:220px;top:508px;width:3px;height:1px;background:#8c8c8c;"></div>
<div class="r" style="left:212px;top:518px;width:11px;height:1px;background:#8c8c8c;"></div>
<div class="r" style="left:220px;top:528px;width:3px;height:1px;background:#8c8c8c;"></div>
<div class="r" style="left:220px;top:538px;width:3px;height:1px;background:#8c8c8c;"></div>
<div class="r" style="left:220px;top:548px;width:3px;height:1px;background:#8c8c8c;"></div>
<div class="r" style="left:220px;top:558px;width:3px;height:1px;background:#8c8c8c;"></div>
<div class="r" style="left:216px;top:568px;width:7px;height:1px;background:#8c8c8c;"></div>
<div class="r" style="left:220px;top:578px;width:3px;height:1px;background:#8c8c8c;"></div>
<div class="r" style="left:220px;top:588px;width:3px;height:1px;background:#8c8c8c;"></div>
<div class="r" style="left:220px;top:598px;width:3px;height:1px;background:#8c8c8c;"></div>
<div class="r" style="left:220px;top:608px;width:3px;height:1px;background:#8c8c8c;"></div>
<div class="r" style="left:212px;top:618px;width:11px;height:1px;background:#8c8c8c;"></div>
<div class="r" style="left:220px;top:628px;width:3px;height:1px;background:#8c8c8c;"></div>
<div class="r" style="left:220px;top:638px;width:3px;height:1px;background:#8c8c8c;"></div>
<div class="r" style="left:220px;top:648px;width:3px;height:1px;background:#8c8c8c;"></div>
<div class="r" style="left:220px;top:658px;width:3px;height:1px;background:#8c8c8c;"></div>
<div class="r" style="left:216px;top:668px;width:7px;height:1px;background:#8c8c8c;"></div>
<div class="r" style="left:220px;top:678px;width:3px;height:1px;background:#8c8c8c;"></div>
<div class="t" style="left:274.5px;top:118.50px;font-size:6.5px;color:#8c8c8c;">-100</div>
<div class="t" style="left:374.5px;top:118.50px;font-size:6.5px;color:#8c8c8c;">0</div>
<div class="t" style="left:474.5px;top:118.50px;font-size:6.5px;color:#8c8c8c;">100</div>
<div class="t" style="left:574.5px;top:118.50px;font-size:6.5px;color:#8c8c8c;">200</div>
<div class="t" style="left:674.5px;top:118.50px;font-size:6.5px;color:#8c8c8c;">300</div>
<div class="t" style="left:774.5px;top:118.50px;font-size:6.5px;color:#8c8c8c;">400</div>
<div class="t" style="left:874.5px;top:118.50px;font-size:6.5px;color:#8c8c8c;">500</div>
<div class="t" style="left:974.5px;top:118.50px;font-size:6.5px;color:#8c8c8c;">600</div>
<div class="t" style="left:1074.5px;top:118.50px;font-size:6.5px;color:#8c8c8c;">700</div>
<div class="t" style="left:216px;top:0px;font-size:6.5px;color:#8c8c8c;transform-origin:0 0;transform:translate(218px,216px) rotate(-90deg) translate(0,0);left:0">0</div>
<div class="t" style="left:316px;top:0px;font-size:6.5px;color:#8c8c8c;transform-origin:0 0;transform:translate(218px,316px) rotate(-90deg) translate(0,0);left:0">100</div>
<div class="t" style="left:416px;top:0px;font-size:6.5px;color:#8c8c8c;transform-origin:0 0;transform:translate(218px,416px) rotate(-90deg) translate(0,0);left:0">200</div>
<div class="t" style="left:516px;top:0px;font-size:6.5px;color:#8c8c8c;transform-origin:0 0;transform:translate(218px,516px) rotate(-90deg) translate(0,0);left:0">300</div>
<div class="t" style="left:616px;top:0px;font-size:6.5px;color:#8c8c8c;transform-origin:0 0;transform:translate(218px,616px) rotate(-90deg) translate(0,0);left:0">400</div>
<div class="r" style="left:373px;top:124px;width:1px;height:562px;background:#7db51a;"></div>
<div class="r" style="left:223px;top:219px;width:931px;height:1px;background:#cc3a4b;"></div>
<div class="r" style="left:373px;top:219px;width:320px;height:1px;background:#9c4f9c;"></div>
<div class="r" style="left:693px;top:219px;width:1px;height:181px;background:#595e98;"></div>
<div class="r" style="left:373px;top:399px;width:321px;height:1px;background:#595e98;"></div>
<div class="r" style="left:373px;top:220px;width:1px;height:179px;background:#7d9a7a;"></div>
<svg class="r" style="left:232.0px;top:135.0px" width="12" height="12" viewBox="0 0 16 16"><circle cx="8" cy="8" r="2" fill="#e0e0e0"/><path d="M1.5 5.5 L4 8 L1.5 10.5 M14.5 5.5 L12 8 L14.5 10.5 M5.5 1.5 L8 4 L10.5 1.5 M5.5 14.5 L8 12 L10.5 14.5" stroke="#e0e0e0" stroke-width="1.2" fill="none"/></svg>
<svg class="r" style="left:256.0px;top:135.0px" width="12" height="12" viewBox="0 0 16 16"><circle cx="8" cy="8" r="7" fill="#e0e0e0"/><rect x="4" y="6.8" width="8" height="2.4" fill="#4d4d4d"/></svg>
<div class="t" style="left:277.5px;top:136.53px;font-size:10px;color:#e8e8e8;">100.0 %</div>
<svg class="r" style="left:323.0px;top:135.0px" width="12" height="12" viewBox="0 0 16 16"><circle cx="8" cy="8" r="7" fill="#e0e0e0"/><rect x="4" y="6.8" width="8" height="2.4" fill="#4d4d4d"/><rect x="6.8" y="4" width="2.4" height="8" fill="#4d4d4d"/></svg>
<div class="r" style="left:225px;top:679.5px;width:927px;height:4.5px;background:#585858;border-radius:2px;"></div>
<div class="r" style="left:530px;top:679.5px;width:621px;height:4.5px;background:#8e8e8e;border-radius:2px;"></div>
<div class="r" style="left:212px;top:113px;width:942px;height:2px;background:rgba(105,175,240,0.62);"></div>
<div class="r" style="left:212px;top:684px;width:942px;height:2px;background:rgba(105,175,240,0.62);"></div>
<div class="r" style="left:212px;top:115px;width:2px;height:569px;background:rgba(105,175,240,0.62);"></div>
<div class="r" style="left:1152px;top:115px;width:2px;height:569px;background:rgba(105,175,240,0.62);"></div>
<div class="r" style="left:212px;top:689px;width:942px;height:31px;background:#1e2128;"></div>
<div class="t" style="left:219.7px;top:701.41px;font-size:10.5px;color:#d7d9dc;">Output</div>
<div class="t" style="left:265.6px;top:701.41px;font-size:10.5px;color:#d7d9dc;">Debugger</div>
<div class="t" style="left:325.4px;top:701.41px;font-size:10.5px;color:#d7d9dc;">Audio</div>
<div class="t" style="left:365.3px;top:701.41px;font-size:10.5px;color:#d7d9dc;">Animation</div>
<div class="t" style="left:426.4px;top:701.41px;font-size:10.5px;color:#d7d9dc;">Shader Editor</div>
<svg class="r" style="left:1075px;top:701px;" width="10" height="10" viewBox="0 0 10 10"><path d="M5 0.5 Q8.5 0.5 8.5 4.5 V7 L9.8 8.5 H0.2 L1.5 7 V4.5 Q1.5 0.5 5 0.5Z M3.5 9 H6.5 V10 H3.5Z" fill="#46494e"/></svg>
<div class="t" style="left:1094px;top:701.11px;font-size:10.5px;color:#9a9c9f;">4.4.1.stable</div>
<div class="r" style="left:1157px;top:62px;width:201px;height:658px;background:#1e2128;border-radius:0 0 4px 4px;"></div>
<div class="r" style="left:1157px;top:62px;width:201px;height:21px;background:#15171b;"></div>
<div class="r" style="left:1157px;top:62px;width:61px;height:21px;background:#1e2128;"></div>
<div class="r" style="left:1157px;top:62px;width:61px;height:2px;background:#5b9bd6;"></div>
<div class="t" style="left:1165px;top:67.11px;font-size:10.5px;color:#d7d9dc;">Inspector</div>
<div class="t" style="left:1226.4px;top:67.11px;font-size:10.5px;color:#8b8d91;">Node</div>
<div class="t" style="left:1268.3px;top:67.11px;font-size:10.5px;color:#8b8d91;">History</div>
<div class="r" style="left:1350.5px;top:66.0px;width:3px;height:3px;border-radius:2px;background:#808285"></div><div class="r" style="left:1350.5px;top:70.5px;width:3px;height:3px;border-radius:2px;background:#808285"></div><div class="r" style="left:1350.5px;top:75.0px;width:3px;height:3px;border-radius:2px;background:#808285"></div>
<svg class="r" style="left:1163.5px;top:90.5px" width="13" height="13" viewBox="0 0 16 16"><path d="M2 1 H8.5 L12 4.5 V15 H2Z" fill="#e0e0e0"/><path d="M8.5 1 V4.5 H12" fill="#9a9a9a"/><circle cx="11.5" cy="12.5" r="2.8" fill="#5fd35f" stroke="#1e2128" stroke-width="1"/></svg>
<svg class="r" style="left:1187.5px;top:90.5px" width="13" height="13" viewBox="0 0 16 16"><path d="M1 4 Q1 2.5 2.5 2.5 H6 L7.5 4 H12 Q13 4 13 5 V7 H5 L3 13.5 H2 Q1 13.5 1 12.5Z" fill="#e0e0e0"/><path d="M4.5 8 H15 L13 13.5 H2.5Z" fill="#e0e0e0"/></svg>
<svg class="r" style="left:1211.5px;top:90.5px" width="13" height="13" viewBox="0 0 16 16"><path d="M1.5 2.5 Q1.5 1.5 2.5 1.5 H12 L14.5 4 V13.5 Q14.5 14.5 13.5 14.5 H2.5 Q1.5 14.5 1.5 13.5Z" fill="#6b6d70"/><rect x="4" y="1.5" width="7" height="4" fill="#1e2128"/><circle cx="8" cy="10" r="1.8" fill="#1e2128"/></svg>
<div class="r" style="left:1240.5px;top:91.0px;width:3px;height:3px;border-radius:2px;background:#e0e0e0"></div><div class="r" style="left:1240.5px;top:95.5px;width:3px;height:3px;border-radius:2px;background:#e0e0e0"></div><div class="r" style="left:1240.5px;top:100.0px;width:3px;height:3px;border-radius:2px;background:#e0e0e0"></div>
<svg class="r" style="left:1302px;top:91px;" width="6" height="11" viewBox="0 0 6 11"><path d="M5 1 L1.5 5.5 L5 10" stroke="#8a8c8f" stroke-width="1.3" fill="none"/></svg>
<svg class="r" style="left:1320px;top:91px;" width="6" height="11" viewBox="0 0 6 11"><path d="M1 1 L4.5 5.5 L1 10" stroke="#8a8c8f" stroke-width="1.3" fill="none"/></svg>
<svg class="r" style="left:1337.5px;top:90.5px" width="13" height="13" viewBox="0 0 16 16"><path d="M3.5 9 A5 5 0 1 0 4.5 4.5" stroke="#8a8c8f" stroke-width="1.8" fill="none"/><path d="M1 4 L4.5 7.5 L6.5 3Z" fill="#8a8c8f"/><path d="M8.5 5 V8.5 L11 10" stroke="#8a8c8f" stroke-width="1.5" fill="none"/></svg>
<div class="r" style="left:1160px;top:110px;width:171px;height:24px;background:#1b1e24;border-radius:3px;"></div>
<svg class="r" style="left:1337.0px;top:115.0px" width="14" height="14" viewBox="0 0 16 16"><circle cx="9" cy="4.5" r="2.8" stroke="#8a8c8f" stroke-width="1.4" fill="none"/><path d="M7 6.5 L5 8.5" stroke="#8a8c8f" stroke-width="1.4"/><text x="8" y="15" font-size="5.5" font-weight="bold" text-anchor="middle" fill="#8a8c8f" font-family="Liberation Sans">DOC</text></svg>
<div class="r" style="left:1160px;top:137px;width:171px;height:24px;background:#1b1e24;border-radius:3px 3px 0 0;border-bottom:2px solid #15171b;box-sizing:border-box;"></div>
<div class="t" style="left:1164.6px;top:143.11px;font-size:10.5px;color:#b0b2b5;">Filter Properties</div>
<svg class="r" style="left:1314.0px;top:142.0px" width="12" height="12" viewBox="0 0 16 16"><circle cx="6.5" cy="6.5" r="4" stroke="#a9abae" stroke-width="1.8" fill="none"/><path d="M9.5 9.5 L13.5 13.5" stroke="#a9abae" stroke-width="2"/></svg>
<svg class="r" style="left:1337.5px;top:141.5px" width="13" height="13" viewBox="0 0 16 16"><path d="M4 1 V10 M11 7 V15 M8.5 1.5 V4 Q8.5 6.5 11 6.5 Q13.5 6.5 13.5 4 V1.5" stroke="#a9abae" stroke-width="1.8" fill="none"/><rect x="2" y="9" width="4" height="6" rx="1.5" fill="#a9abae"/></svg>
<div class="r" style="left:1160px;top:164px;width:195px;height:553px;background:#14171b;border-radius:4px;"></div>
</body></html>
